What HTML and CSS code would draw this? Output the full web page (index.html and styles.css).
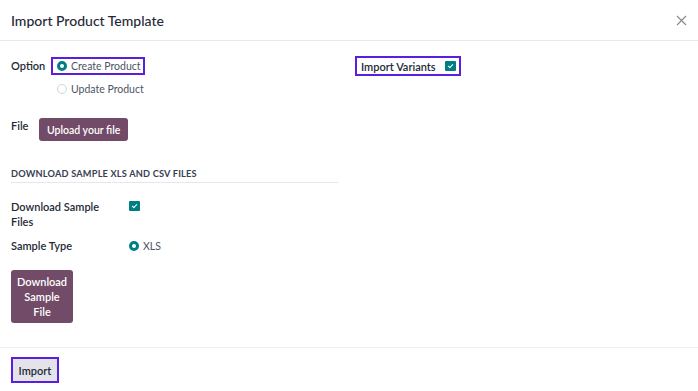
FILE: index.html
```html
<!DOCTYPE html>
<html lang="en">
  <head>
    <meta charset="UTF-8" />
    <meta name="viewport" content="width=device-width, initial-scale=1.0" />
    <title>Import Product Template</title>
    <link rel="stylesheet" href="styles.css">
  </head>
  <body>
    <div class="modal">
      <header class="modal-header">
        <h1>Import Product Template</h1>
        <button type="button" class="close-btn" aria-label="Close">
          <svg width="11" height="11" viewBox="0 0 11 11">
            <path d="M1 1 L10 10 M10 1 L1 10" stroke="#8a8a8a" stroke-width="1.2" fill="none" />
          </svg>
        </button>
      </header>

      <main class="modal-body">
        <div class="top-grid">
          <div class="left-group">
            <div class="option-row">
              <span class="label">Option</span>
              <div class="radios">
                <label class="radio highlight">
                  <span class="radio-dot checked"></span>
                  Create Product
                </label>
                <label class="radio">
                  <span class="radio-dot"></span>
                  Update Product
                </label>
              </div>
            </div>
            <div class="file-row">
              <span class="label">File</span>
              <button type="button" class="btn-primary">Upload your file</button>
            </div>
          </div>

          <div class="right-group">
            <label class="variants highlight">
              <span class="label">Import Variants</span>
              <span class="check"></span>
            </label>
          </div>
        </div>

        <section class="sample">
          <h2>Download Sample XLS and CSV Files</h2>
          <div class="sample-row">
            <span class="label">Download Sample Files</span>
            <span class="check"></span>
          </div>
          <div class="sample-row type-row">
            <span class="label">Sample Type</span>
            <label class="radio">
              <span class="radio-dot checked"></span>
              XLS
            </label>
          </div>
          <button type="button" class="btn-primary btn-download">Download Sample File</button>
        </section>
      </main>

      <footer class="modal-footer">
        <button type="button" class="btn-import">Import</button>
      </footer>
    </div>
  </body>
</html>
```

FILE: styles.css
```css
body {
  margin: 0;
  font-family: Lato, "Noto Sans", Arial, sans-serif;
  color: #374151;
  background-color: white;
}
.modal {
  width: 698px;
  height: 391px;
  display: flex;
  flex-direction: column;
  box-sizing: border-box;
}
.modal-header {
  height: 40px;
  border-bottom: 1px solid #e7e9ed;
  display: flex;
  align-items: center;
  justify-content: space-between;
  padding: 0 11px 0 11px;
  flex-shrink: 0;
}
.modal-header h1 {
  margin: 0;
  font-size: 14px;
  font-weight: 500;
  color: #1f2937;
}
.close-btn {
  background: none;
  border: none;
  padding: 0;
  display: flex;
}
.modal-body {
  flex: 1;
  padding: 16px 11px 0 11px;
  font-size: 11px;
}
.top-grid {
  display: grid;
  grid-template-columns: 338px 1fr;
  column-gap: 6px;
}
.label {
  font-weight: 600;
  color: #1f2937;
}
.option-row {
  display: flex;
}
.option-row .label {
  width: 40px;
  padding-top: 2px;
}
.radios {
  display: flex;
  flex-direction: column;
  align-items: flex-start;
  gap: 6px;
}
.radio {
  display: flex;
  align-items: center;
  gap: 4px;
  font-size: 10.5px;
  color: #4b5563;
  height: 12px;
  padding: 0 2px 0 4px;
  border: 2px solid transparent;
}
.highlight {
  border: 2px solid #5b1ee0;
}
.radios .highlight {
  padding: 1px 2px 1px 4px;
}
.radio-dot {
  width: 10px;
  height: 10px;
  box-sizing: border-box;
  border-radius: 50%;
  border: 1px solid #d1d5db;
  background-color: white;
}
.radio-dot.checked {
  border: 3px solid #017e84;
}
.file-row {
  display: flex;
  align-items: flex-start;
  margin-top: 21px;
}
.file-row .label {
  width: 28px;
  padding-top: 1px;
}
.btn-primary {
  background-color: #714b67;
  color: white;
  border: none;
  border-radius: 3px;
  font-family: inherit;
  font-size: 10.5px;
  font-weight: 600;
  padding: 0 8px;
  height: 23px;
  cursor: pointer;
}
.variants {
  display: inline-flex;
  align-items: center;
  gap: 9px;
  padding: 0 3px 0 4px;
  height: 16px;
  margin-top: -1px;
}
.check {
  width: 11px;
  height: 10px;
  background-color: #017e84;
  border-radius: 1px;
  position: relative;
}
.check::after {
  content: "";
  position: absolute;
  left: 3px;
  top: 3px;
  width: 4px;
  height: 2px;
  border-left: 1.2px solid white;
  border-bottom: 1.2px solid white;
  transform: rotate(-45deg);
}
.sample {
  margin-top: 27px;
}
.sample h2 {
  margin: 0;
  width: 327px;
  font-size: 9.2px;
  font-weight: 700;
  text-transform: uppercase;
  letter-spacing: 0.2px;
  color: #374151;
  padding-bottom: 3px;
  border-bottom: 1px solid #e5e7eb;
}
.sample-row {
  display: grid;
  grid-template-columns: 118px 1fr;
  align-items: start;
  margin-top: 16px;
  line-height: 15px;
}
.sample-row .label {
  width: 90px;
}
.sample-row .check {
  margin-top: 2px;
}
.type-row {
  margin-top: 9px;
}
.type-row .radio {
  padding: 0;
  border: none;
  margin-top: 2px;
}
.btn-download {
  display: block;
  margin-top: 17px;
  width: 62px;
  height: 53px;
  font-size: 11px;
  line-height: 15px;
  padding: 0 6px;
}
.modal-footer {
  border-top: 1px solid #eef0f2;
  padding: 9px 11px;
  height: 44px;
  box-sizing: border-box;
  flex-shrink: 0;
}
.btn-import {
  background-color: #e2e4ea;
  border: 2px solid #5b1ee0;
  color: #1f2937;
  font-family: inherit;
  font-size: 11px;
  font-weight: 600;
  height: 26px;
  width: 48px;
  padding: 0;
}
```
